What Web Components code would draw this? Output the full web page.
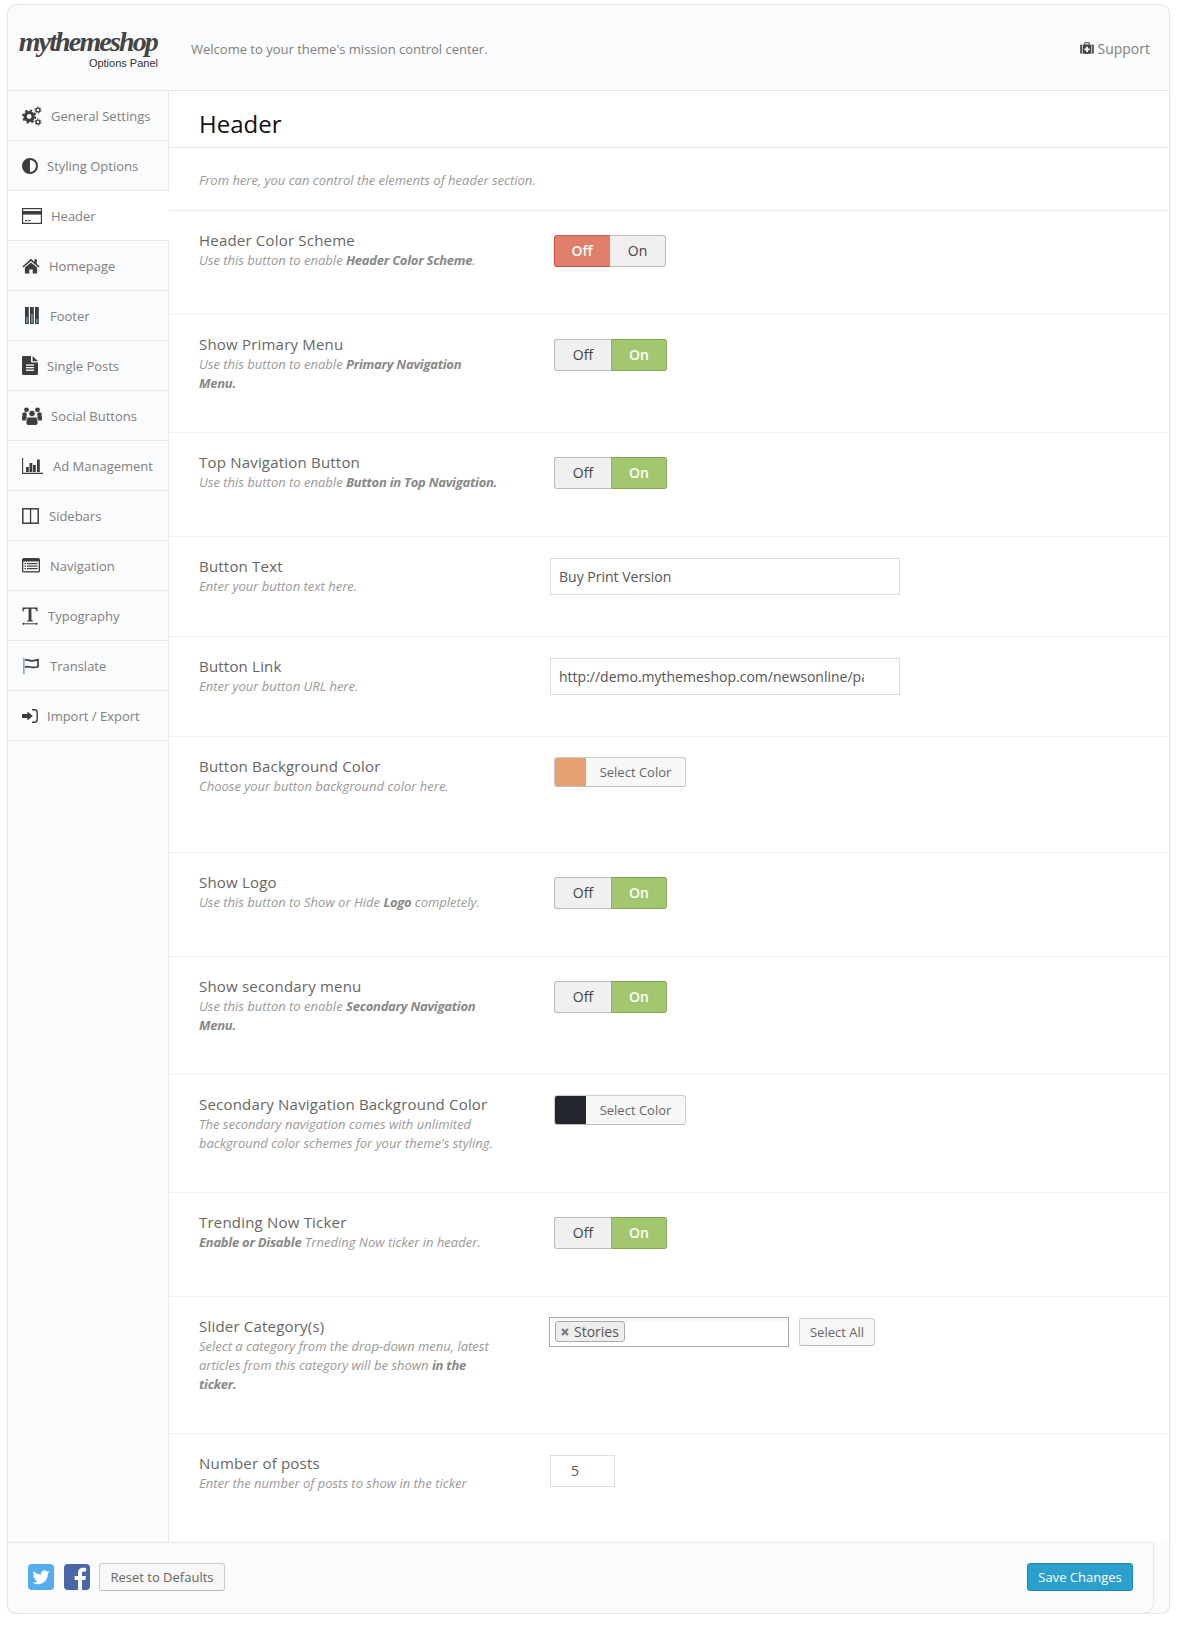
<!DOCTYPE html>
<html>
<head>
<meta charset="utf-8">
<title>Options Panel</title>
<style>
  html, body { margin: 0; padding: 0; background: #fff; }
  body { font-family: "Open Sans", sans-serif; }
</style>
</head>
<body>
<mts-panel>
  <mts-topbar slot="top"></mts-topbar>

  <mts-nav-item slot="nav" icon="gears" w="20">General Settings</mts-nav-item>
  <mts-nav-item slot="nav" icon="contrast" w="16">Styling Options</mts-nav-item>
  <mts-nav-item slot="nav" icon="card" w="20" active>Header</mts-nav-item>
  <mts-nav-item slot="nav" icon="home" w="18">Homepage</mts-nav-item>
  <mts-nav-item slot="nav" icon="columns" w="19">Footer</mts-nav-item>
  <mts-nav-item slot="nav" icon="file" w="16">Single Posts</mts-nav-item>
  <mts-nav-item slot="nav" icon="users" w="20">Social Buttons</mts-nav-item>
  <mts-nav-item slot="nav" icon="chart" w="22">Ad Management</mts-nav-item>
  <mts-nav-item slot="nav" icon="sidebars" w="18">Sidebars</mts-nav-item>
  <mts-nav-item slot="nav" icon="list" w="19">Navigation</mts-nav-item>
  <mts-nav-item slot="nav" icon="type" w="17">Typography</mts-nav-item>
  <mts-nav-item slot="nav" icon="flag" w="19">Translate</mts-nav-item>
  <mts-nav-item slot="nav" icon="import" w="16">Import / Export</mts-nav-item>

  <mts-section-head slot="main" note="From here, you can control the elements of header section.">Header</mts-section-head>

  <mts-row slot="main" h="104" label="Header Color Scheme">
    Use this button to enable <b>Header Color Scheme</b>.
    <mts-switch slot="control" state="off"></mts-switch>
  </mts-row>
  <mts-row slot="main" h="118" label="Show Primary Menu">
    Use this button to enable <b>Primary Navigation<br>Menu.</b>
    <mts-switch slot="control" state="on"></mts-switch>
  </mts-row>
  <mts-row slot="main" h="104" label="Top Navigation Button">
    Use this button to enable <b>Button in Top Navigation.</b>
    <mts-switch slot="control" state="on"></mts-switch>
  </mts-row>
  <mts-row slot="main" h="100" label="Button Text" top="21">
    Enter your button text here.
    <mts-field slot="control">Buy Print Version</mts-field>
  </mts-row>
  <mts-row slot="main" h="100" label="Button Link" top="21">
    Enter your button URL here.
    <mts-field slot="control">http://demo.mythemeshop.com/newsonline/page/2/</mts-field>
  </mts-row>
  <mts-row slot="main" h="116" label="Button Background Color" top="20">
    Choose your button background color here.
    <mts-color slot="control" color="#e5a173"></mts-color>
  </mts-row>
  <mts-row slot="main" h="104" label="Show Logo">
    Use this button to Show or Hide <b>Logo</b> completely.
    <mts-switch slot="control" state="on"></mts-switch>
  </mts-row>
  <mts-row slot="main" h="118" label="Show secondary menu">
    Use this button to enable <b>Secondary Navigation<br>Menu.</b>
    <mts-switch slot="control" state="on"></mts-switch>
  </mts-row>
  <mts-row slot="main" h="118" label="Secondary Navigation Background Color" top="20">
    The secondary navigation comes with unlimited<br>background color schemes for your theme's styling.
    <mts-color slot="control" color="#24262e"></mts-color>
  </mts-row>
  <mts-row slot="main" h="104" label="Trending Now Ticker">
    <b>Enable or Disable</b> Trneding Now ticker in header.
    <mts-switch slot="control" state="on"></mts-switch>
  </mts-row>
  <mts-row slot="main" h="137" label="Slider Category(s)" top="20">
    Select a category from the drop-down menu, latest<br>articles from this category will be shown <b>in the<br>ticker.</b>
    <mts-tags slot="control"></mts-tags>
  </mts-row>
  <mts-row slot="main" h="108" label="Number of posts" top="21" last>
    Enter the number of posts to show in the ticker
    <mts-number slot="control">5</mts-number>
  </mts-row>

  <mts-bottombar slot="bottom"></mts-bottombar>
</mts-panel>

<script>
const ICONS = {
  gears: `<svg viewBox="0 0 20 20"><g fill="none" stroke="#3d3d3d">
      <circle cx="7.2" cy="10.5" r="4" stroke-width="3.2"/>
      <circle cx="7.2" cy="10.5" r="6.2" stroke-width="1.8" stroke-dasharray="2.43 2.43"/>
      <circle cx="16" cy="4" r="1.9" stroke-width="1.4"/>
      <circle cx="16" cy="4" r="3.1" stroke-width="1" stroke-dasharray="1.6 1.65"/>
      <circle cx="16" cy="16" r="1.9" stroke-width="1.4"/>
      <circle cx="16" cy="16" r="3.1" stroke-width="1" stroke-dasharray="1.6 1.65"/></g></svg>`,
  contrast: `<svg viewBox="0 0 16 16"><circle cx="8" cy="8" r="7" fill="#fff" stroke="#3d3d3d" stroke-width="2"/><path d="M8 1v14a7 7 0 0 1 0-14z" fill="#3d3d3d"/></svg>`,
  card: `<svg viewBox="0 0 20 16"><rect x=".6" y=".6" width="18.8" height="14.8" fill="none" stroke="#3d3d3d" stroke-width="1.2"/><rect x="1" y="3" width="18" height="3.6" fill="#3d3d3d"/><rect x="3" y="12" width="2.4" height="1.2" fill="#3d3d3d"/><rect x="6.4" y="12" width="2" height="1.2" fill="#3d3d3d"/></svg>`,
  home: `<svg viewBox="0 0 18 16"><path d="M9 .8 .4 8.4l1 1.1L9 3l7.6 6.5 1-1.1-2.8-2.4V1.2h-2.4v2.7z" fill="#3d3d3d"/><path d="M9 4.4 2.9 9.6V15.6h4.4v-4.2h3.4v4.2h4.4V9.6z" fill="#3d3d3d"/></svg>`,
  columns: `<svg viewBox="0 0 19 19"><g fill="#3d3d3d"><rect x="3" y="1" width="3.8" height="17"/><rect x="8" y="1" width="3.8" height="17"/><rect x="13" y="1" width="3.8" height="17"/></g><g fill="#7fa3c2"><rect x="4.200" y="11" width="1.400" height="6"/><rect x="9.200" y="8" width="1.400" height="9"/><rect x="14.200" y="13" width="1.400" height="4"/></g></svg>`,
  file: `<svg viewBox="0 0 16 19"><path d="M0 1.2C0 .5.5 0 1.2 0H9v5.6c0 .5.4.9.9.9H16v11.3c0 .7-.5 1.2-1.2 1.2H1.2C.5 19 0 18.5 0 17.800z" fill="#3d3d3d"/><path d="M10.600 0 16 5.200h-5.400z" fill="#3d3d3d"/><g fill="#fff"><rect x="4" y="8.400" width="8" height="1.300"/><rect x="4" y="11" width="8" height="1.300"/><rect x="4" y="13.600" width="8" height="1.300"/></g></svg>`,
  users: `<svg viewBox="0 0 20 18" fill="#3d3d3d"><circle cx="4.500" cy="2.800" r="2.400"/><circle cx="15.500" cy="2.800" r="2.400"/><circle cx="10" cy="6.500" r="3.200" stroke="#fafbfd" stroke-width=".8"/><circle cx="2.500" cy="7.500" r="2.300"/><circle cx="17.500" cy="7.500" r="2.300"/><path d="M0 10c0-1 1-1 2-1h2l1 1.500c-1 1-1.500 2-1.500 3H1c-.6 0-1-.5-1-1zM20 10c0-1-1-1-2-1h-2l-1 1.500c1 1 1.500 2 1.500 3H19c.6 0 1-.5 1-1z"/><path d="M7 10.500h6c1.500 0 2.500 1.200 2.500 3v2.800c0 1-.7 1.700-1.700 1.700H6.200c-1 0-1.700-.7-1.700-1.700v-2.800c0-1.800 1-3 2.500-3z"/></svg>`,
  chart: `<svg viewBox="0 0 22 16"><path d="M.6 0v15.400H21" fill="none" stroke="#3d3d3d" stroke-width="1.100"/><g fill="#3d3d3d"><rect x="4" y="9" width="2.800" height="5"/><rect x="7.500" y="5" width="2.800" height="9"/><rect x="11" y="7" width="2.800" height="7"/><rect x="15" y="1.500" width="2.800" height="12.500"/></g></svg>`,
  sidebars: `<svg viewBox="0 0 18 16"><rect x=".8" y=".8" width="15.400" height="14.400" fill="none" stroke="#3d3d3d" stroke-width="1.500"/><rect x="7.900" y="1" width="1.300" height="14" fill="#3d3d3d"/></svg>`,
  list: `<svg viewBox="0 0 19 15"><rect width="18" height="14.500" rx="1.500" fill="#3d3d3d"/><rect x="1.300" y="3.500" width="15.400" height="9.700" fill="#fafbfd"/><g fill="#3d3d3d"><rect x="2.500" y="5" width="1.500" height="1.200"/><rect x="5" y="5" width="10.500" height="1.200"/><rect x="2.500" y="7.500" width="1.500" height="1.200"/><rect x="5" y="7.500" width="10.500" height="1.200"/><rect x="2.500" y="10" width="1.500" height="1.200"/><rect x="5" y="10" width="10.500" height="1.200"/></g></svg>`,
  type: `<svg viewBox="0 0 17 18"><path d="M.5 4.500V.6h15v3.900h-1c-.2-1.700-.8-2.700-2.400-2.700H9.400v10.800c0 .8.500 1 1.600 1.100v.8H5v-.8c1.100-.1 1.600-.3 1.600-1.100V1.800H3.900c-1.600 0-2.200 1-2.400 2.700z" fill="#3d3d3d"/><path d="M1 16.800h14" stroke="#3d3d3d" stroke-width="1"/><path d="M0 16.800l2-1.400v2.800zM16 16.800l-2-1.400v2.800z" fill="#3d3d3d"/></svg>`,
  flag: `<svg viewBox="0 0 19 16"><rect x="1.200" y="0" width="1.300" height="16" fill="#6d93b5"/><path d="M3 2.300c2.500-1.500 4.600.6 7 .6 2.400 0 4-.8 6-1.200v7c-2 .7-3.500 1-6 .6-2.500-.3-4.500-1.300-7-.2" fill="none" stroke="#3d3d3d" stroke-width="1.700"/></svg>`,
  import: `<svg viewBox="0 0 16 14"><path d="M0 5.100h5.400V2.400L10.800 7l-5.400 4.600V8.900H0z" fill="#3d3d3d"/><path d="M10 .7h2.500c1.500 0 2.700 1.200 2.700 2.700v7.200c0 1.500-1.200 2.700-2.700 2.700H10" fill="none" stroke="#3d3d3d" stroke-width="1.400"/></svg>`,
  medkit: `<svg viewBox="0 0 14 12"><path d="M4.300 2.500V1.200C4.300.6 4.800.2 5.400.2h3.200c.6 0 1.100.4 1.100 1V2.500H8.600V1.300H5.400v1.200z" fill="#444"/><rect x="2.700" y="2.500" width="8.600" height="9.300" fill="#444"/><rect x=".2" y="2.500" width="1.700" height="9.300" rx=".7" fill="#444"/><rect x="12.100" y="2.500" width="1.700" height="9.300" rx=".7" fill="#444"/><path d="M6.100 4.700h1.800v1.700h1.700v1.800H7.900v1.700H6.100V8.200H4.400V6.400h1.700z" fill="#fff"/></svg>`
};

class MtsIcon extends HTMLElement {
  connectedCallback() {
    const w = this.getAttribute("w") || 16;
    this.attachShadow({ mode: "open" });
    this.shadowRoot.innerHTML = `
      <style>
        :host { display: inline-flex; align-items: center; justify-content: flex-start; width: ${w}px; flex: none; }
        svg { display: block; width: 100%; height: auto; }
      </style>
      ${ICONS[this.getAttribute("name")] || ""}
    `;
  }
}

class MtsPanel extends HTMLElement {
  constructor() {
    super();
    this.attachShadow({ mode: "open" });
    this.shadowRoot.innerHTML = `
      <style>
        :host {
          display: block;
          margin: 4px 8px 0 7px;
          color: #555;
          font-family: "Open Sans", sans-serif;
        }
        .card {
          border: 1px solid #e6e6e6;
          border-radius: 10px;
          background: #fafbfd;
          box-shadow: 0 1px 2px rgba(0,0,0,.08);
          overflow: hidden;
        }
        .body { display: flex; }
        nav {
          width: 161px;
          flex: none;
          border-right: 1px solid #e8e8e8;
          box-sizing: border-box;
        }
        main { flex: 1; min-width: 0; background: #fff; }
      </style>
      <div class="card">
        <slot name="top"></slot>
        <div class="body">
          <nav><slot name="nav"></slot></nav>
          <main><slot name="main"></slot></main>
        </div>
        <slot name="bottom"></slot>
      </div>
    `;
  }
}

class MtsTopbar extends HTMLElement {
  constructor() {
    super();
    this.attachShadow({ mode: "open" });
    this.shadowRoot.innerHTML = `
      <style>
        :host {
          display: flex;
          align-items: center;
          height: 86px;
          box-sizing: border-box;
          border-bottom: 1px solid #e6e6e6;
          padding: 0 19px 0 12px;
        }
        .logo { width: 138px; display: flex; flex-direction: column; align-items: flex-end; flex: none; padding-top: 3px; }
        .brand {
          font: italic bold 28px/28px "Liberation Serif", serif;
          letter-spacing: -1.85px;
          color: #444;
          white-space: nowrap;
          padding-right: 1px;
        }
        .sub { font: 11px/13px "Liberation Sans", sans-serif; color: #333; margin-top: 1px; }
        .welcome { margin-left: 33px; font-size: 13px; color: #808080; flex: 1; padding-top: 3px; }
        .support { display: flex; align-items: center; gap: 3px; font-size: 14px; color: #808080; padding-top: 1px; }
      </style>
      <div class="logo"><div class="brand">mythemeshop</div><div class="sub">Options Panel</div></div>
      <div class="welcome">Welcome to your theme's mission control center.</div>
      <div class="support"><mts-icon name="medkit" w="14"></mts-icon>Support</div>
    `;
  }
}

class MtsNavItem extends HTMLElement {
  connectedCallback() {
    const active = this.hasAttribute("active");
    this.attachShadow({ mode: "open" });
    this.shadowRoot.innerHTML = `
      <style>
        :host {
          display: flex;
          align-items: center;
          gap: 9px;
          height: 50px;
          box-sizing: border-box;
          padding: 0 0 0 14px;
          border-bottom: 1px solid #e8e8e8;
          font-size: 13px;
          color: #808080;
          ${active ? "background: #fff; margin-right: -1px; position: relative;" : ""}
        }
      </style>
      <mts-icon name="${this.getAttribute("icon")}" w="${this.getAttribute("w")}"></mts-icon>
      <slot></slot>
    `;
  }
}

class MtsSectionHead extends HTMLElement {
  connectedCallback() {
    this.attachShadow({ mode: "open" });
    this.shadowRoot.innerHTML = `
      <style>
        :host { display: block; }
        h1 {
          margin: 0;
          height: 57px;
          box-sizing: border-box;
          border-bottom: 1px solid #ebebeb;
          padding: 16px 0 0 30px;
          font-size: 24px;
          line-height: 33px;
          font-weight: 400;
          color: #111;
        }
        p {
          margin: 0;
          height: 63px;
          box-sizing: border-box;
          border-bottom: 1px solid #ebebeb;
          padding: 23px 0 0 30px;
          font-size: 13px;
          line-height: 19px;
          font-style: italic;
          color: #999;
        }
      </style>
      <h1><slot></slot></h1>
      <p>${this.getAttribute("note")}</p>
    `;
  }
}

class MtsRow extends HTMLElement {
  connectedCallback() {
    const h = this.getAttribute("h");
    const top = this.getAttribute("top") || 24;
    const last = this.hasAttribute("last");
    this.attachShadow({ mode: "open" });
    this.shadowRoot.innerHTML = `
      <style>
        :host {
          display: grid;
          grid-template-columns: 326px 1fr;
          column-gap: 29px;
          height: ${h}px;
          box-sizing: border-box;
          padding: 19px 0 0 30px;
          ${last ? "" : "border-bottom: 1px solid #f0f0f0;"}
        }
        .label { font-size: 15px; line-height: 21px; letter-spacing: .2px; color: #666; }
        .desc { font-size: 13px; line-height: 19px; font-style: italic; color: #999; white-space: nowrap; }
        ::slotted(b) { color: #888; font-weight: 700; letter-spacing: -.25px; }
        .ctl { margin-top: ${top - 19}px; }
      </style>
      <div>
        <div class="label">${this.getAttribute("label")}</div>
        <div class="desc"><slot></slot></div>
      </div>
      <div class="ctl"><slot name="control"></slot></div>
    `;
  }
}

class MtsSwitch extends HTMLElement {
  connectedCallback() {
    const on = this.getAttribute("state") === "on";
    this.attachShadow({ mode: "open" });
    this.shadowRoot.innerHTML = `
      <style>
        :host { display: inline-flex; height: 32px; font-size: 14px; font-weight: 500; border-radius: 3px; }
        span {
          width: 56px;
          box-sizing: border-box;
          display: flex;
          align-items: center;
          justify-content: center;
          padding-bottom: 2px;
          background: #f0f0f0;
          color: #444;
          border: 1px solid #bbb;
        }
        .a { border-radius: 3px 0 0 3px; border-right: 0; ${on ? "width: 57px;" : ""} }
        .b { border-radius: 0 3px 3px 0; border-left: 0; }
        .off-on { font-weight: 600; background: #de7e6b; color: #fff; border: 1px solid #de7e6b; border-bottom-color: #d9503a; border-left-color: #d9503a; border-top-color: #c9604c; }
        .on-on { font-weight: 600; background: #a3c76e; color: #fff; border: 1px solid #a3c76e; border-top-color: #7e9e50; border-bottom-color: #84a656; border-right-color: #8aaa5c; border-left: 1px solid #90a0a0; }
      </style>
      <span class="a ${on ? "" : "off-on"}">Off</span>
      <span class="b ${on ? "on-on" : ""}">On</span>
    `;
  }
}

class MtsField extends HTMLElement {
  constructor() {
    super();
    this.attachShadow({ mode: "open" });
    this.shadowRoot.innerHTML = `
      <style>
        :host {
          display: block;
          width: 350px;
          height: 37px;
          box-sizing: border-box;
          border: 1px solid #ddd;
          padding: 0 35px 0 8px;
          font-size: 14px;
          line-height: 35px;
          color: #555;
          margin-left: -4px;
          background: #fff;
        }
        div { overflow: hidden; white-space: nowrap; }
      </style>
      <div><slot></slot></div>
    `;
  }
}

class MtsColor extends HTMLElement {
  connectedCallback() {
    this.attachShadow({ mode: "open" });
    this.shadowRoot.innerHTML = `
      <style>
        :host {
          display: inline-flex;
          height: 30px;
          width: 132px;
          box-sizing: border-box;
          border: 1px solid #ccc;
          border-bottom-color: #bbb;
          border-radius: 3px;
          background: #f7f7f7;
          overflow: hidden;
          font-size: 13px;
          color: #666;
        }
        i { width: 31px; flex: none; background: ${this.getAttribute("color")}; }
        span { flex: 1; text-align: center; line-height: 28px; }
      </style>
      <i></i><span>Select Color</span>
    `;
  }
}

class MtsTags extends HTMLElement {
  constructor() {
    super();
    this.attachShadow({ mode: "open" });
    this.shadowRoot.innerHTML = `
      <style>
        :host { display: flex; align-items: flex-start; gap: 10px; margin-left: -5px; }
        .box {
          display: flex;
          align-items: flex-start;
          width: 240px;
          height: 30px;
          box-sizing: border-box;
          border: 1px solid #aaa;
          padding: 3px 5px;
          background: linear-gradient(#f4f4f4, #fff 20%);
        }
        .tag {
          display: inline-flex;
          align-items: center;
          height: 21px;
          box-sizing: border-box;
          border: 1px solid #aaa;
          border-radius: 3px;
          background: #eee;
          padding: 0 5px;
          gap: 5px;
          font-size: 14px;
          color: #555;
        }
        .tag svg { width: 8px; height: 8px; display: block; margin-top: 1px; }
        button {
          width: 76px;
          height: 28px;
          margin: 1px 0 0;
          padding: 0;
          border: 1px solid #ccc;
          border-bottom-color: #bbb;
          border-radius: 3px;
          background: #f7f7f7;
          font: 13px "Open Sans", sans-serif;
          color: #666;
        }
      </style>
      <div class="box"><span class="tag"><svg viewBox="0 0 8 8"><path d="M1 1l6 6M7 1l-6 6" stroke="#777" stroke-width="2"/></svg>Stories</span></div>
      <button>Select All</button>
    `;
  }
}

class MtsNumber extends HTMLElement {
  constructor() {
    super();
    this.attachShadow({ mode: "open" });
    this.shadowRoot.innerHTML = `
      <style>
        :host {
          display: block;
          width: 65px;
          height: 32px;
          box-sizing: border-box;
          border: 1px solid #ddd;
          padding-left: 20px;
          margin-left: -4px;
          font-size: 14px;
          line-height: 30px;
          color: #555;
        }
      </style>
      <slot></slot>
    `;
  }
}

class MtsBottombar extends HTMLElement {
  constructor() {
    super();
    this.attachShadow({ mode: "open" });
    this.shadowRoot.innerHTML = `
      <style>
        :host {
          display: flex;
          align-items: center;
          height: 71px;
          width: 1145px;
          box-sizing: border-box;
          padding: 0 20px 2px 20px;
          border-top: 1px solid #e8e8e8;
          border-radius: 0 0 10px 0;
          box-shadow: 0 1px 2px rgba(0,0,0,.12), 1px 0 1px rgba(0,0,0,.04);
          background: #fafbfd;
          position: relative;
          font-size: 13px;
        }
        svg { display: block; width: 26px; height: 26px; flex: none; }
        .fb { margin-left: 10px; }
        button {
          height: 28px;
          padding: 0;
          font: 13px "Open Sans", sans-serif;
          border-radius: 3px;
        }
        .reset {
          width: 126px;
          margin-left: 9px;
          border: 1px solid #ccc;
          border-bottom-color: #bbb;
          background: #f7f7f7;
          color: #666;
        }
        .save {
          width: 106px;
          margin-left: auto;
          border: 1px solid #1e86ad;
          background: #2ca0cc;
          color: #fff;
        }
      </style>
      <svg viewBox="0 0 26 26"><rect width="26" height="26" rx="4" fill="#55acee"/><path transform="translate(4.500 4.800) scale(.71)" fill="#fff" d="M23.953 4.570a10 10 0 0 1-2.825.775 4.958 4.958 0 0 0 2.163-2.723c-.951.555-2.005.959-3.127 1.184a4.920 4.920 0 0 0-8.384 4.482C7.690 8.095 4.067 6.130 1.640 3.162a4.822 4.822 0 0 0-.666 2.475c0 1.710.870 3.213 2.188 4.096a4.904 4.904 0 0 1-2.228-.616v.060a4.923 4.923 0 0 0 3.946 4.827 4.996 4.996 0 0 1-2.212.085 4.936 4.936 0 0 0 4.604 3.417 9.867 9.867 0 0 1-6.102 2.105c-.390 0-.779-.023-1.170-.067a13.995 13.995 0 0 0 7.557 2.209c9.053 0 13.998-7.496 13.998-13.985 0-.210 0-.420-.015-.630A9.935 9.935 0 0 0 24 4.590z"/></svg>
      <svg class="fb" viewBox="0 0 26 26"><rect width="26" height="26" rx="4" fill="#4a66a6"/><path fill="#fff" d="M18 26V16h3.400l.5-4H18V9.500c0-1.200.4-2 2-2h2.100V4c-.4 0-1.600-.2-3-.2-3 0-5.100 1.800-5.100 5.200v3h-3.400v4H14v10z"/></svg>
      <button class="reset">Reset to Defaults</button>
      <button class="save">Save Changes</button>
    `;
  }
}

customElements.define("mts-icon", MtsIcon);
customElements.define("mts-panel", MtsPanel);
customElements.define("mts-topbar", MtsTopbar);
customElements.define("mts-nav-item", MtsNavItem);
customElements.define("mts-section-head", MtsSectionHead);
customElements.define("mts-row", MtsRow);
customElements.define("mts-switch", MtsSwitch);
customElements.define("mts-field", MtsField);
customElements.define("mts-color", MtsColor);
customElements.define("mts-tags", MtsTags);
customElements.define("mts-number", MtsNumber);
customElements.define("mts-bottombar", MtsBottombar);
</script>
</body>
</html>
